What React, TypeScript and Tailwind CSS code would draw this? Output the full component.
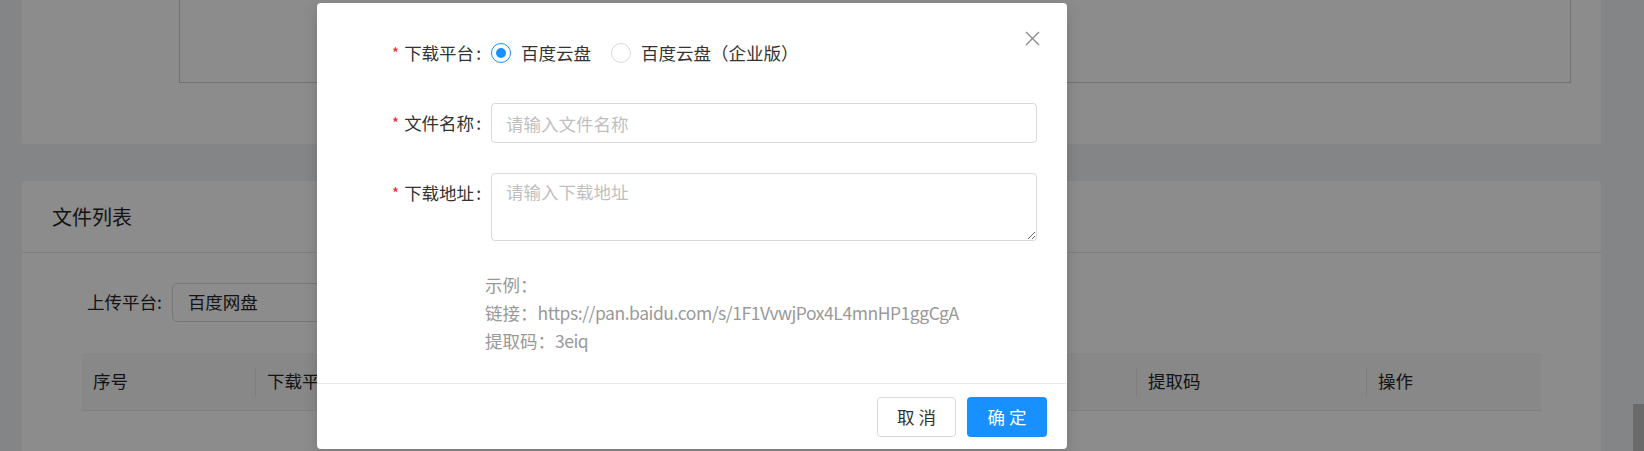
import React from 'react';

const font = "font-['Noto_Sans_CJK_SC',sans-serif]";

function Label({ text }: { text: string }) {
  return (
    <div className="flex h-[40px] w-[144px] shrink-0 items-center justify-end text-[#333]">
      <span className="mr-[5px] text-[15px] text-[#f5222d]">*</span>
      <span>{text}</span>
      <span className="ml-[2px] mr-[10px]">:</span>
    </div>
  );
}

function Radio({ checked, label }: { checked?: boolean; label: string }) {
  return (
    <label className="mr-[10px] flex items-center">
      <span
        className={
          checked
            ? 'flex h-[20px] w-[20px] items-center justify-center rounded-full border border-[#1890ff] bg-white'
            : 'flex h-[20px] w-[20px] items-center justify-center rounded-full border border-[#d9d9d9] bg-white'
        }
      >
        {checked ? <span className="h-[10px] w-[10px] rounded-full bg-[#1890ff]" /> : null}
      </span>
      <span className="px-[10px] text-[#333]">{label}</span>
    </label>
  );
}

function HeadCell({ title, width, divider = true }: { title: string; width?: string; divider?: boolean }) {
  return (
    <div className={`flex items-center ${width ?? 'flex-1'}`}>
      {divider ? <span className="h-[28px] w-px bg-[#e3e3e3]" /> : null}
      <span className="pl-[11px]">{title}</span>
    </div>
  );
}

export default function App() {
  return (
    <div className={`relative h-[451px] w-full overflow-hidden bg-[#f0f2f5] text-[17.5px] ${font}`}>
      {/* page behind the dialog */}
      <div className="pl-[22px] pr-[43px]">
        <div className="h-[144px] rounded-b-[3px] bg-white pl-[157px] pr-[30px]">
          <div className="h-[83px] border border-t-0 border-[#cad3d1]" />
        </div>

        <div className="mt-[37px] h-[400px] rounded-t-[3px] bg-white text-[#262626]">
          <div className="flex h-[72px] items-center border-b border-[#e8e8e8] px-[30px] text-[20px]">
            文件列表
          </div>
          <div className="px-[60px] pt-[30px]">
            <div className="flex h-[39px] items-center">
              <span className="ml-[5px] mr-[10px]">上传平台:</span>
              <div className="flex h-[39px] w-[320px] items-center rounded-[5px] border border-[#d9d9d9] pl-[15px]">
                百度网盘
              </div>
            </div>
            <div className="mt-[31px] flex h-[58px] border-b border-[#e8e8e8] bg-[#f7f7f7]">
              <HeadCell title="序号" width="w-[173px]" divider={false} />
              <HeadCell title="下载平台" width="w-[300px]" />
              <HeadCell title="文件名称" width="w-[300px]" />
              <HeadCell title="下载地址" />
              <HeadCell title="提取码" width="w-[230px]" />
              <HeadCell title="操作" width="w-[175px]" />
            </div>
          </div>
        </div>
      </div>
      <div className="absolute right-0 top-[404px] h-[60px] w-[11px] bg-[#c1c1c1]" />

      {/* mask */}
      <div className="absolute inset-0 bg-black/45" />

      {/* dialog */}
      <div className="absolute left-[317px] top-[3px] w-[750px] rounded-[4px] bg-white shadow-[0_5px_15px_rgba(0,0,0,0.15)]">
        <button className="absolute right-0 top-0 flex h-[70px] w-[70px] items-center justify-center">
          <svg width="15" height="15" viewBox="0 0 15 15" fill="none">
            <path d="M1 1L14 14M14 1L1 14" stroke="#8c8c8c" strokeWidth="1.4" />
          </svg>
        </button>

        <div className="px-[30px] pb-[28px] pt-[30px]">
          <div className="flex h-[40px]">
            <Label text="下载平台" />
            <div className="flex items-center">
              <Radio checked label="百度云盘" />
              <Radio label="百度云盘（企业版）" />
            </div>
          </div>

          <div className="mt-[30px] flex h-[40px]">
            <Label text="文件名称" />
            <input
              className="h-[40px] flex-1 rounded-[4px] border border-[#d9d9d9] px-[14px] outline-none placeholder:text-[#bfbfbf]"
              placeholder="请输入文件名称"
            />
          </div>

          <div className="mt-[30px] flex">
            <Label text="下载地址" />
            <textarea
              className="h-[68px] flex-1 rounded-[4px] border border-[#d9d9d9] px-[14px] py-[5px] leading-[26px] outline-none placeholder:text-[#bfbfbf]"
              placeholder="请输入下载地址"
            />
          </div>

          <div className="ml-[138px] mt-[30px] leading-[28px] text-[#999]">
            <p>示例：</p>
            <p>
              链接：<span className="tracking-[-0.45px]">https://pan.baidu.com/s/1F1VvwjPox4L4mnHP1ggCgA</span>
            </p>
            <p>
              提取码：<span className="tracking-[-0.45px]">3eiq</span>
            </p>
          </div>
        </div>

        <div className="flex justify-end gap-[11px] border-t border-[#e8e8e8] px-[20px] pb-[12px] pt-[13px]">
          <button className="h-[40px] w-[79px] rounded-[4px] border border-[#d9d9d9] bg-white text-[#333]">
            取 消
          </button>
          <button className="h-[40px] w-[80px] rounded-[4px] bg-[#1890ff] text-white">确 定</button>
        </div>
      </div>
    </div>
  );
}
